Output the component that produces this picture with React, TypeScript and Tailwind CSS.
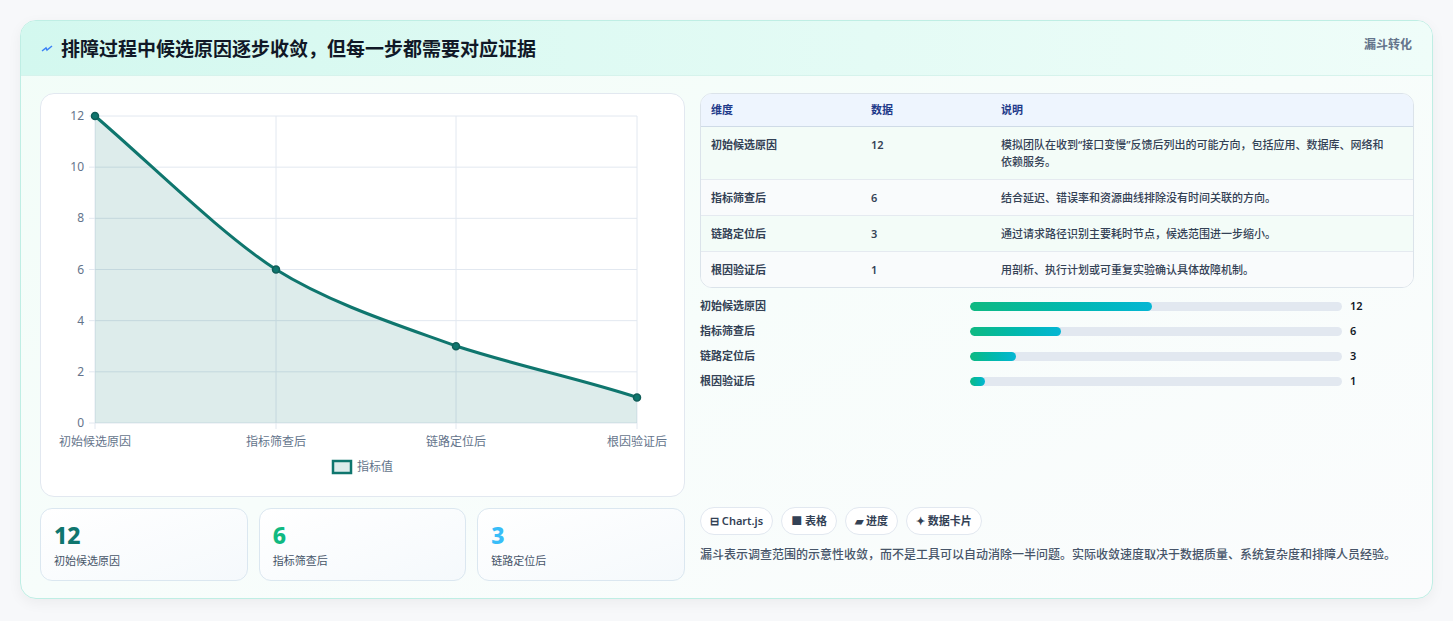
import React from "react";

const rows = [
  { n: "初始候选原因", v: 12, d: "模拟团队在收到“接口变慢”反馈后列出的可能方向，包括应用、数据库、网络和依赖服务。" },
  { n: "指标筛查后", v: 6, d: "结合延迟、错误率和资源曲线排除没有时间关联的方向。" },
  { n: "链路定位后", v: 3, d: "通过请求路径识别主要耗时节点，候选范围进一步缩小。" },
  { n: "根因验证后", v: 1, d: "用剖析、执行计划或可重复实验确认具体故障机制。" },
];

function Chart() {
  const X = [54, 235, 415, 596];
  const y = (v: number) => 329 - v * 25.583;
  const pts = rows.map((r, i) => [X[i], y(r.v)]);
  const line = `M54,22 C110,70 180,140 235,175.5 C290,210 360,232 415,252 C480,273 540,285 596,303.4`;
  return (
    <svg width="644" height="400" className="block">
      {[0, 2, 4, 6, 8, 10, 12].map((v) => (
        <g key={v}>
          <line x1="54" x2="596" y1={y(v)} y2={y(v)} stroke="#e2e8f0" />
          <line x1="48" x2="54" y1={y(v)} y2={y(v)} stroke="#e2e8f0" />
          <text x="43" y={y(v) + 4} textAnchor="end" fontSize="12" fill="#64748b">{v}</text>
        </g>
      ))}
      {X.map((x) => (
        <line key={x} x1={x} x2={x} y1="22" y2="335" stroke="#e2e8f0" />
      ))}
      <path d={`${line} L596,329 L54,329 Z`} fill="#0f766e" fillOpacity="0.14" />
      <path d={line} fill="none" stroke="#0f766e" strokeWidth="3" />
      {pts.map(([a, b], i) => (
        <circle key={i} cx={a} cy={b} r="3.5" fill="#0f766e" stroke="#115e59" strokeWidth="1.5" />
      ))}
      {rows.map((r, i) => (
        <text key={i} x={X[i]} y="352" textAnchor="middle" fontSize="12" fill="#64748b">{r.n}</text>
      ))}
      <rect x="292" y="367" width="18" height="12" fill="#0f766e" fillOpacity="0.14" stroke="#0f766e" strokeWidth="2.5" />
      <text x="316" y="377" fontSize="12" fill="#64748b">指标值</text>
    </svg>
  );
}

export default function App() {
  const font = { fontFamily: '"Noto Sans", "Noto Sans CJK SC", sans-serif' };
  return (
    <div className="w-[1453px] h-[621px] bg-[#f7f8fa] pt-[20px] pl-[20px]" style={font}>
      <div className="w-[1413px] h-[579px] rounded-[16px] border border-[#bfeee4] bg-gradient-to-br from-[#f2fdf8] via-[#f7fdfb] to-[#fbfcfd] overflow-hidden shadow-[0_4px_14px_rgba(0,0,0,0.05)]">
        <div className="h-[55px] bg-gradient-to-r from-[#d3f8ef] to-[#effdf9] border-b border-[#d6f3ec] flex items-start justify-between pl-[20px] pr-[20px]">
          <div className="flex items-center gap-[8px] mt-[14px]">
            <svg width="12" height="10" viewBox="0 0 12 10"><path d="M1 7 L5 4 L6 6 L11 2" stroke="#3b82f6" strokeWidth="1.5" fill="none" /></svg>
            <span className="text-[19px] font-bold text-[#111827]">排障过程中候选原因逐步收敛，但每一步都需要对应证据</span>
          </div>
          <span className="mt-[15px] text-[12px] font-bold text-[#64748b]">漏斗转化</span>
        </div>
        <div className="flex gap-[15px] pl-[19px] pt-[17px]">
          <div className="w-[645px] flex flex-col gap-[11px]">
            <div className="h-[404px] bg-white rounded-[14px] border border-[#e2e8f0]">
              <Chart />
            </div>
            <div className="flex gap-[11px]">
              {[
                ["12", "初始候选原因", "text-[#0f766e]"],
                ["6", "指标筛查后", "text-[#10b981]"],
                ["3", "链路定位后", "text-[#38bdf8]"],
              ].map(([v, l, c]) => (
                <div key={l} className="flex-1 h-[73px] rounded-[12px] border border-[#dbe7f0] bg-gradient-to-br from-white to-[#f5f9fc] pl-[13px] pt-[12px]">
                  <div className={`text-[23px] font-extrabold leading-[28px] ${c}`}>{v}</div>
                  <div className="text-[11px] text-[#475569] mt-[4px]">{l}</div>
                </div>
              ))}
            </div>
          </div>
          <div className="w-[714px] flex flex-col">
            <div className="rounded-[12px] border border-[#dbe3ea] overflow-hidden text-[11px] bg-white">
              <div className="flex h-[33px] items-center bg-[#eef5fe] border-b border-[#cfdbe7] text-[#1e3a8a] font-semibold">
                <div className="w-[170px] pl-[10px]">维度</div>
                <div className="w-[130px]">数据</div>
                <div className="flex-1">说明</div>
              </div>
              {rows.map((r, i) => (
                <div key={i} className={`flex py-[9px] text-[#334155] font-semibold ${i > 0 ? "border-t border-[#e5eaf0]" : ""} ${i % 2 === 0 ? "bg-[#f3fcf8]" : "bg-[#f9fbfc]"}`}>
                  <div className="w-[170px] pl-[10px] leading-[17px]">{r.n}</div>
                  <div className="w-[130px] leading-[17px]">{r.v}</div>
                  <div className="flex-1 pr-[20px] leading-[17px] font-medium">{r.d}</div>
                </div>
              ))}
            </div>
            <div className="flex flex-col gap-[8px] mt-[10px]">
              {rows.map((r) => (
                <div key={r.n} className="flex items-center h-[17px] text-[11px] font-semibold text-[#334155]">
                  <div className="w-[270px]">{r.n}</div>
                  <div className="w-[372px] h-[9px] rounded-full bg-[#e2e8f0] overflow-hidden">
                    <div className="h-full rounded-full bg-gradient-to-r from-[#10b981] to-[#06b6d4]" style={{ width: `${Math.max(r.v / 24.5, 0.035) * 100}%` }} />
                  </div>
                  <div className="ml-[8px] text-[#111827]">{r.v}</div>
                </div>
              ))}
            </div>
            <div className="flex gap-[8px] mt-[117px]">
              {["⊟ Chart.js", "■ 表格", "▰ 进度", "✦ 数据卡片"].map((t) => (
                <div key={t} className="h-[28px] px-[9px] flex items-center rounded-full border border-[#e2e8f0] bg-white text-[11px] font-semibold text-[#334155]">{t}</div>
              ))}
            </div>
            <p className="mt-[11px] text-[12px] leading-[18px] text-[#475569] font-medium pr-[10px]">漏斗表示调查范围的示意性收敛，而不是工具可以自动消除一半问题。实际收敛速度取决于数据质量、系统复杂度和排障人员经验。</p>
          </div>
        </div>
      </div>
    </div>
  );
}
